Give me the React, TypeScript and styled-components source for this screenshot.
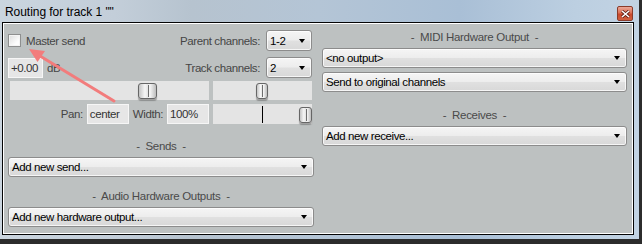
import React from 'react';
import styled, { createGlobalStyle } from 'styled-components';

const GlobalStyle = createGlobalStyle`
  html, body {
    margin: 0;
    padding: 0;
    background: #2c2c2c;
  }
  body {
    font-family: "Liberation Sans", Arial, sans-serif;
  }
`;

const App = () => {
  return (
    <>
      <GlobalStyle />
      <Glass>
        <TitleBar>
          <Title>Routing for track 1 ""</Title>
          <CloseButton>
            <svg width="9" height="8" viewBox="0 0 9 8">
              <path d="M1 1 L8 7 M8 1 L1 7" stroke="#5a1a10" strokeWidth="3" />
              <path d="M1 1 L8 7 M8 1 L1 7" stroke="#ffffff" strokeWidth="1.6" />
            </svg>
          </CloseButton>
        </TitleBar>
        <Client>
          <LeftColumn>
            <Row>
              <CheckLabel>
                <CheckBox />
                <Label>Master send</Label>
              </CheckLabel>
              <RightGroup>
                <Label>Parent channels:</Label>
                <Combo $w={46} $h={21}>
                  <ComboText>1-2</ComboText>
                  <Caret />
                </Combo>
              </RightGroup>
            </Row>
            <Row $top={6}>
              <CheckLabel>
                <Edit $w={35}>+0.00</Edit>
                <Label>dB</Label>
              </CheckLabel>
              <RightGroup>
                <Label>Track channels:</Label>
                <Combo $w={46} $h={21}>
                  <ComboText>2</ComboText>
                  <Caret />
                </Combo>
              </RightGroup>
            </Row>
            <SliderRow>
              <Track $w={199}>
                <Thumb $w={19} style={{ left: 128 }} />
              </Track>
              <Track $w={99}>
                <Thumb $w={12} style={{ left: 43 }} />
              </Track>
            </SliderRow>
            <PanRow>
              <Label>Pan:</Label>
              <Edit $w={42}>center</Edit>
              <Label>Width:</Label>
              <Edit $w={42}>100%</Edit>
              <Track $w={99} $h={20}>
                <CenterMark />
                <Thumb $w={13} style={{ left: 86, top: 3 }} />
              </Track>
            </PanRow>
            <Heading $top={12}>-&nbsp; Sends &nbsp;-</Heading>
            <Combo $top={1}>
              <ComboText>Add new send...</ComboText>
              <Caret />
            </Combo>
            <Heading $top={9}>-&nbsp; Audio Hardware Outputs &nbsp;-</Heading>
            <Combo $top={1}>
              <ComboText>Add new hardware output...</ComboText>
              <Caret />
            </Combo>
          </LeftColumn>
          <RightColumn>
            <Heading>-&nbsp; MIDI Hardware Output &nbsp;-</Heading>
            <Combo $top={1}>
              <ComboText>&lt;no output&gt;</ComboText>
              <Caret />
            </Combo>
            <Combo $top={4}>
              <ComboText>Send to original channels</ComboText>
              <Caret />
            </Combo>
            <Heading $top={13}>-&nbsp; Receives &nbsp;-</Heading>
            <Combo $top={1}>
              <ComboText>Add new receive...</ComboText>
              <Caret />
            </Combo>
          </RightColumn>
        </Client>
        <Annotation width="642" height="244" viewBox="0 0 642 244">
          <line x1="114" y1="101" x2="40" y2="56" stroke="#f27c7c" strokeWidth="3" strokeLinecap="round" />
          <polygon points="29,49 45,51 37.5,62" fill="#f27c7c" />
        </Annotation>
      </Glass>
    </>
  );
};

export default App;

const Glass = styled.div`
  position: relative;
  box-sizing: border-box;
  width: 639px;
  height: 239px;
  padding: 0 5px 4px 2px;
  display: flex;
  flex-direction: column;
  background: linear-gradient(90deg, #cad5df 0%, #c3ced9 18%, #b6c3cf 30%, #b4c5d6 50%, #a9bfd6 72%, #bccfe1 90%, #c2d3e3 100%);
`;

const TitleBar = styled.div`
  height: 22px;
  display: flex;
  align-items: flex-start;
  justify-content: space-between;
  padding-left: 3px;
`;

const Title = styled.div`
  font-size: 12px;
  letter-spacing: -0.05px;
  color: #000;
  line-height: 15px;
  margin-top: 5px;
`;

const CloseButton = styled.div`
  box-sizing: border-box;
  width: 16px;
  height: 15px;
  margin-top: 6px;
  margin-right: 1px;
  border: 1px solid #8a3b2a;
  border-radius: 2px;
  background: linear-gradient(#eaa797 0%, #dc7056 45%, #c9482c 55%, #d0603f 100%);
  display: flex;
  align-items: center;
  justify-content: center;
`;

const Client = styled.div`
  flex: 1;
  display: flex;
  gap: 8px;
  border: 1px solid #050505;
  box-shadow: inset 0 0 0 1px #ffffff;
  background: #bdc1c1;
`;

const LeftColumn = styled.div`
  width: 306px;
  margin-left: 5px;
  padding-top: 7px;
  display: flex;
  flex-direction: column;
`;

const RightColumn = styled.div`
  width: 305px;
  padding-top: 4px;
  display: flex;
  flex-direction: column;
`;

const Row = styled.div<{ $top?: number }>`
  display: flex;
  align-items: center;
  justify-content: space-between;
  height: 21px;
  margin-top: ${(p) => p.$top ?? 0}px;
  padding-right: 2px;
`;

const CheckLabel = styled.div`
  display: flex;
  align-items: center;
  gap: 4px;
`;

const RightGroup = styled.div`
  display: flex;
  align-items: center;
  gap: 6px;
`;

const Label = styled.span`
  font-size: 11.5px;
  letter-spacing: -0.4px;
  color: #454545;
  white-space: nowrap;
`;

const CheckBox = styled.div`
  box-sizing: border-box;
  width: 13px;
  height: 13px;
  margin-right: 1px;
  border: 1px solid #8e8f8f;
  background: linear-gradient(135deg, #dcdcdc, #fdfdfd 70%);
  box-shadow: inset 0 0 0 1px #f4f4f4;
`;

const Edit = styled.div<{ $w: number }>`
  box-sizing: border-box;
  width: ${(p) => p.$w}px;
  height: 20px;
  border: 1px solid #f6f6f6;
  background: #e6e6e6;
  font-size: 11.5px;
  letter-spacing: -0.4px;
  color: #333;
  line-height: 18px;
  padding-left: 2px;
`;

const SliderRow = styled.div`
  display: flex;
  gap: 4px;
  margin-top: 3px;
  padding-left: 2px;
`;

const PanRow = styled.div`
  display: flex;
  align-items: center;
  justify-content: flex-end;
  gap: 4px;
  margin-top: 4px;
  padding-right: 2px;
`;

const Track = styled.div<{ $w: number; $h?: number }>`
  position: relative;
  width: ${(p) => p.$w}px;
  height: ${(p) => p.$h ?? 19}px;
  background: #e4e4e4;
`;

const Thumb = styled.div<{ $w: number }>`
  position: absolute;
  top: 2px;
  box-sizing: border-box;
  width: ${(p) => p.$w}px;
  height: 16px;
  border: 1px solid #666;
  border-radius: 3px;
  background: linear-gradient(90deg, #c4c4c4 0%, #f6f6f6 35%, #e6e6e6 50%, #f4f4f4 65%, #bdbdbd 100%);
  box-shadow: 0 2px 1px rgba(80, 80, 80, 0.45);

  &::after {
    content: '';
    position: absolute;
    left: 50%;
    top: 1px;
    bottom: 1px;
    width: 1px;
    background: #6e6e6e;
  }
`;

const CenterMark = styled.div`
  position: absolute;
  left: 49px;
  top: 2px;
  bottom: 1px;
  width: 1px;
  background: #000;
`;

const Heading = styled.div<{ $top?: number }>`
  height: 20px;
  line-height: 20px;
  margin-top: ${(p) => p.$top ?? 0}px;
  text-align: center;
  font-size: 11.5px;
  letter-spacing: -0.3px;
  color: #4a4a4a;
`;

const Combo = styled.div<{ $w?: number; $h?: number; $top?: number }>`
  box-sizing: border-box;
  width: ${(p) => (p.$w ? `${p.$w}px` : '100%')};
  height: ${(p) => p.$h ?? 20}px;
  margin-top: ${(p) => p.$top ?? 0}px;
  border: 1px solid #8c8c8c;
  border-radius: 3px;
  background: linear-gradient(#f5f5f5 0%, #ededed 48%, #e0e0e0 52%, #d8d8d8 100%);
  box-shadow: inset 0 0 0 1px rgba(255, 255, 255, 0.75);
  display: flex;
  align-items: center;
  padding: 0 6px 0 3px;
  font-size: 11.5px;
  letter-spacing: -0.4px;
  color: #000;
`;

const ComboText = styled.span`
  flex: 1;
  white-space: nowrap;
`;

const Caret = styled.span`
  width: 0;
  height: 0;
  border-left: 3.5px solid transparent;
  border-right: 3.5px solid transparent;
  border-top: 4px solid #000;
`;

const Annotation = styled.svg`
  position: absolute;
  left: 0;
  top: 0;
  pointer-events: none;
`;
